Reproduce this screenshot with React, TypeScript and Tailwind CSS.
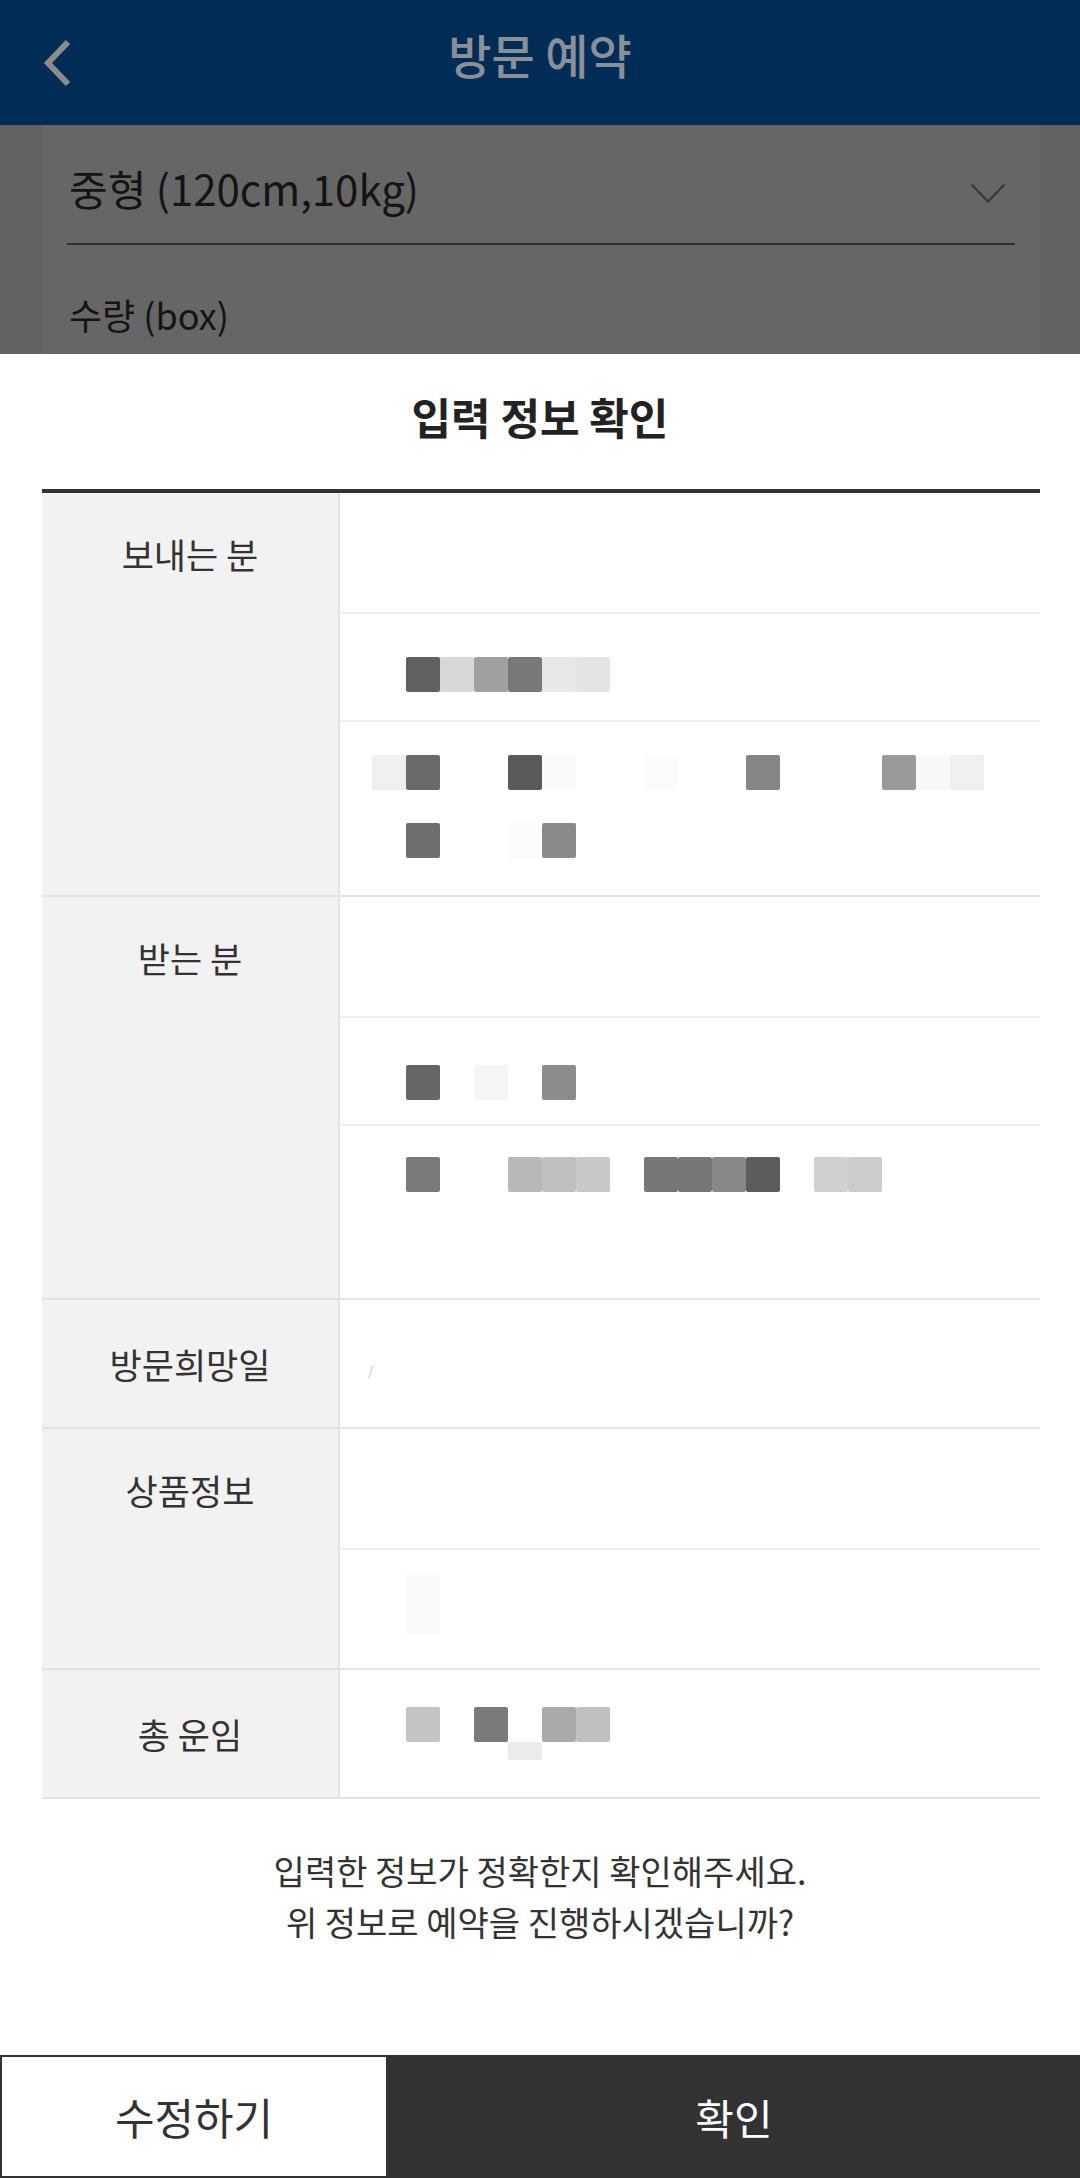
import React from 'react';

type Cell = [number, string];

// one line of the redaction mosaic: cells are 34px wide, starting at col 0
function MosaicLine({ cells, h = 35 }: { cells: Cell[]; h?: number }) {
  const max = Math.max(...cells.map((c) => c[0]));
  const cols = Array.from({ length: max + 1 }, (_, i) => cells.find((c) => c[0] === i)?.[1]);
  return (
    <div className="flex">
      {cols.map((color, i) => (
        <span
          key={i}
          className="block w-[34px] shrink-0 rounded-[2px]"
          style={{ height: h, backgroundColor: color ?? 'transparent' }}
        />
      ))}
    </div>
  );
}

function Label({ text, h = 'h-[121px]' }: { text: string; h?: string }) {
  return (
    <div className={`${h} flex items-center justify-center text-[35px] text-[#333] leading-[44px]`}>
      {text}
    </div>
  );
}

export default function App() {
  return (
    <div className="w-[1080px] h-[2178px] overflow-hidden bg-[#626262] font-['Noto_Sans_CJK_KR','Noto_Sans',sans-serif] flex flex-col">
      {/* dimmed page header */}
      <div className="h-[125px] shrink-0 bg-[#002c55] grid grid-cols-[1fr_auto_1fr] items-center">
        <div className="pl-[43px] flex items-center">
          <svg width="28" height="48" viewBox="0 0 28 48" fill="none">
            <polyline points="25,3 5,24 25,45" stroke="#8c8c8c" strokeWidth="6" strokeLinejoin="miter" />
          </svg>
        </div>
        <div className="text-[47px] font-medium text-[#8a9099] leading-[60px] pb-[18px]">방문 예약</div>
        <div />
      </div>

      {/* dimmed page content */}
      <div className="h-[229px] shrink-0 overflow-hidden">
        <div className="ml-[42px] w-[998px] h-full bg-[#666666] pt-[40px] px-[25px]">
          <div className="h-[80px] border-b-2 border-[#2e2e2e] flex justify-between items-start pr-[9px] pl-[2px]">
            <span className="text-[42px] leading-[60px] text-[#141414] -mt-[7px]">중형 (120cm,10kg)</span>
            <svg className="mt-[18px]" width="36" height="21" viewBox="0 0 36 21" fill="none">
              <polyline points="1.5,1.5 18,18.5 34.5,1.5" stroke="#3a3a3a" strokeWidth="2.5" />
            </svg>
          </div>
          <div className="mt-[47px] pl-[2px] text-[36px] leading-[44px] text-[#141414]">수량 (box)</div>
        </div>
      </div>

      {/* bottom sheet */}
      <div className="flex-1 bg-white flex flex-col">
        <div className="h-[135px] pb-[12px] flex items-center justify-center text-[43px] font-bold text-[#222] leading-[54px]">
          입력 정보 확인
        </div>

        <div className="ml-[42px] w-[998px] border-t-4 border-[#333]">
          {/* 보내는 분 */}
          <div className="grid grid-cols-[298px_1fr] border-b-2 border-[#e3e3e3]">
            <div className="bg-[#f2f2f2] border-r-2 border-[#e4e4e4]">
              <Label text="보내는 분" />
            </div>
            <div className="flex flex-col">
              <div className="h-[121px] border-b-2 border-[#efefef]" />
              <div className="h-[108px] border-b-2 border-[#efefef] pt-[43px] pl-[32px]">
                <MosaicLine cells={[[1, '#606060'], [2, '#d8d8d8'], [3, '#a0a0a0'], [4, '#787878'], [5, '#e8e8e8'], [6, '#e4e4e4']]} />
              </div>
              <div className="h-[173px] pt-[33px] pl-[32px] flex flex-col gap-[33px]">
                <MosaicLine
                  cells={[[0, '#efefef'], [1, '#6a6a6a'], [4, '#5a5a5a'], [5, '#fafafa'], [8, '#fbfbfb'], [11, '#858585'], [15, '#9a9a9a'], [16, '#f8f8f8'], [17, '#efefef']]}
                />
                <MosaicLine cells={[[1, '#6e6e6e'], [4, '#fbfbfb'], [5, '#8a8a8a']]} />
              </div>
            </div>
          </div>

          {/* 받는 분 */}
          <div className="grid grid-cols-[298px_1fr] border-b-2 border-[#e3e3e3]">
            <div className="bg-[#f2f2f2] border-r-2 border-[#e4e4e4]">
              <Label text="받는 분" />
            </div>
            <div className="flex flex-col">
              <div className="h-[121px] border-b-2 border-[#efefef]" />
              <div className="h-[108px] border-b-2 border-[#efefef] pt-[47px] pl-[32px]">
                <MosaicLine cells={[[1, '#666666'], [3, '#f5f5f5'], [5, '#8c8c8c']]} />
              </div>
              <div className="h-[172px] pt-[31px] pl-[32px]">
                <MosaicLine
                  cells={[[1, '#7a7a7a'], [4, '#b8b8b8'], [5, '#c0c0c0'], [6, '#c8c8c8'], [8, '#777777'], [9, '#777777'], [10, '#888888'], [11, '#5c5c5c'], [13, '#d0d0d0'], [14, '#cccccc']]}
                />
              </div>
            </div>
          </div>

          {/* 방문희망일 */}
          <div className="grid grid-cols-[298px_1fr] border-b-2 border-[#e3e3e3]">
            <div className="bg-[#f2f2f2] border-r-2 border-[#e4e4e4]">
              <Label text="방문희망일" h="h-[127px]" />
            </div>
            <div className="h-[127px] flex items-center pl-[28px]">
              <span className="text-[14px] text-[#c8c8c8] leading-none mt-[12px]">/</span>
            </div>
          </div>

          {/* 상품정보 */}
          <div className="grid grid-cols-[298px_1fr] border-b-2 border-[#e3e3e3]">
            <div className="bg-[#f2f2f2] border-r-2 border-[#e4e4e4]">
              <Label text="상품정보" />
            </div>
            <div className="flex flex-col">
              <div className="h-[121px] border-b-2 border-[#efefef]" />
              <div className="h-[118px] pt-[22px] pl-[32px]">
                <MosaicLine cells={[[1, '#fafafa']]} h={62} />
              </div>
            </div>
          </div>

          {/* 총 운임 */}
          <div className="grid grid-cols-[298px_1fr] border-b-2 border-[#e3e3e3]">
            <div className="bg-[#f2f2f2] border-r-2 border-[#e4e4e4]">
              <Label text="총 운임" h="h-[127px]" />
            </div>
            <div className="h-[127px] pt-[37px] pl-[32px]">
              <MosaicLine cells={[[1, '#c4c4c4'], [3, '#7a7a7a'], [5, '#aaaaaa'], [6, '#c0c0c0']]} />
              <MosaicLine cells={[[4, '#ebebeb']]} h={18} />
            </div>
          </div>
        </div>

        <div className="pt-[46px] text-center text-[34px] leading-[51px] text-[#333]">
          <p>입력한 정보가 정확한지 확인해주세요.</p>
          <p>위 정보로 예약을 진행하시겠습니까?</p>
        </div>

        <div className="mt-auto h-[123px] flex">
          <button className="w-[388px] h-full border-2 border-[#333] bg-white text-[43px] text-[#333]">수정하기</button>
          <button className="flex-1 h-full bg-[#333] text-[42px] text-white">확인</button>
        </div>
      </div>
    </div>
  );
}
